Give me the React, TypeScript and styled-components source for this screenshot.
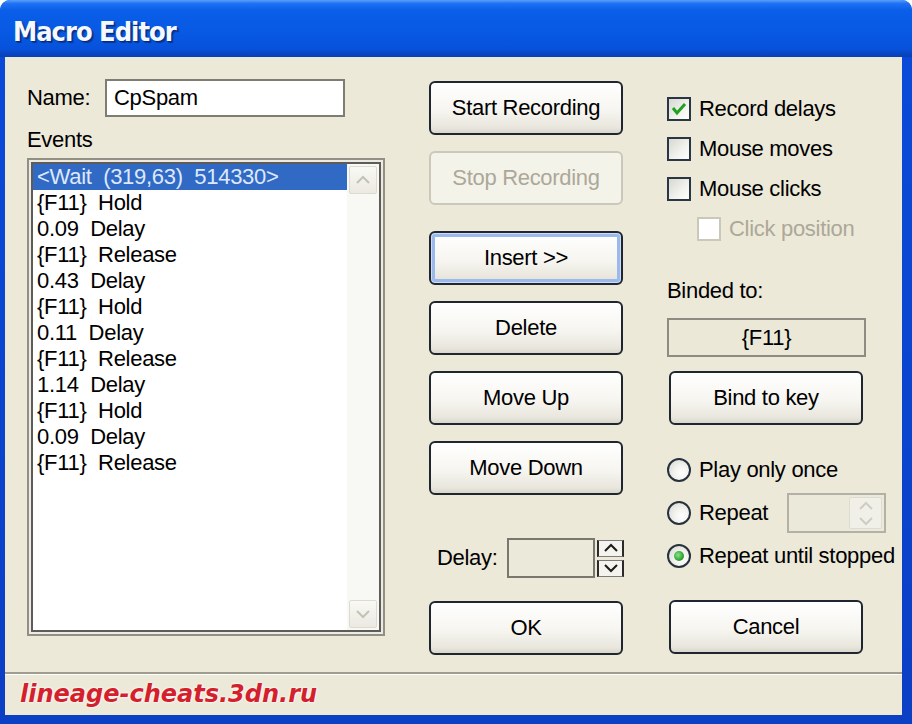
import React from 'react'
import styled, { createGlobalStyle } from 'styled-components'

const events = [
	'{F11}  Hold',
	'0.09  Delay',
	'{F11}  Release',
	'0.43  Delay',
	'{F11}  Hold',
	'0.11  Delay',
	'{F11}  Release',
	'1.14  Delay',
	'{F11}  Hold',
	'0.09  Delay',
	'{F11}  Release',
]

function Chevron({ up, color }: { up?: boolean; color: string }) {
	return (
		<svg width="16" height="10" viewBox="0 0 16 10">
			<polyline
				points={up ? '2,8 8,2 14,8' : '2,2 8,8 14,2'}
				fill="none"
				stroke={color}
				strokeWidth="2"
				strokeLinejoin="miter"
			/>
		</svg>
	)
}

function CheckOption({ label, checked, disabled, indent }: { label: string; checked?: boolean; disabled?: boolean; indent?: boolean }) {
	return (
		<StyledOptionRow $indent={indent}>
			<StyledCheckBox $disabled={disabled}>
				{checked && (
					<svg width="18" height="18" viewBox="0 0 18 18">
						<polyline points="3,8 7,13 15,4" fill="none" stroke="#21a121" strokeWidth="3" />
					</svg>
				)}
			</StyledCheckBox>
			<StyledOptionLabel $disabled={disabled}>{label}</StyledOptionLabel>
		</StyledOptionRow>
	)
}

function RadioOption({ label, selected, children }: { label: string; selected?: boolean; children?: React.ReactNode }) {
	return (
		<StyledRadioRow $tall={!!children}>
			<StyledRadio>{selected && <StyledRadioDot />}</StyledRadio>
			<StyledOptionLabel $width={children ? 88 : undefined}>{label}</StyledOptionLabel>
			{children}
		</StyledRadioRow>
	)
}

export default function App() {
	return (
		<>
			<GlobalStyle />
			<StyledWindow>
				<StyledTitleBar>
					<StyledTitle>Macro Editor</StyledTitle>
				</StyledTitleBar>
				<StyledFrame>
					<StyledClient>
						<StyledContent>
							<StyledColumn>
								<StyledNameRow>
									<StyledLabel $width={78}>Name:</StyledLabel>
									<StyledTextInput defaultValue="CpSpam" />
								</StyledNameRow>
								<StyledEventsLabel>Events</StyledEventsLabel>
								<StyledListFrame>
									<StyledList>
										<StyledListItem $selected>{'<Wait  (319,63)  514330>'}</StyledListItem>
										{events.map((item, i) => (
											<StyledListItem key={i}>{item}</StyledListItem>
										))}
									</StyledList>
									<StyledScrollbar>
										<StyledScrollArrow>
											<Chevron up color="#c4c2b6" />
										</StyledScrollArrow>
										<StyledScrollArrow>
											<Chevron color="#c4c2b6" />
										</StyledScrollArrow>
									</StyledScrollbar>
								</StyledListFrame>
							</StyledColumn>

							<StyledColumn $top={24}>
								<StyledButton>Start Recording</StyledButton>
								<StyledButton disabled $gap={16}>
									Stop Recording
								</StyledButton>
								<StyledButton $focused $gap={26}>
									Insert &gt;&gt;
								</StyledButton>
								<StyledButton $gap={16}>Delete</StyledButton>
								<StyledButton $gap={16}>Move Up</StyledButton>
								<StyledButton $gap={16}>Move Down</StyledButton>
								<StyledDelayRow>
									<StyledLabel $width={70}>Delay:</StyledLabel>
									<StyledDelayInput />
									<StyledSpin>
										<StyledSpinButton>
											<Chevron up color="#1a1a1a" />
										</StyledSpinButton>
										<StyledSpinButton>
											<Chevron color="#1a1a1a" />
										</StyledSpinButton>
									</StyledSpin>
								</StyledDelayRow>
								<StyledButton $gap={23}>OK</StyledButton>
							</StyledColumn>

							<StyledColumn $top={40}>
								<CheckOption label="Record delays" checked />
								<CheckOption label="Mouse moves" />
								<CheckOption label="Mouse clicks" />
								<CheckOption label="Click position" disabled indent />
								<StyledBindLabel>Binded to:</StyledBindLabel>
								<StyledBindBox>{'{F11}'}</StyledBindBox>
								<StyledButton $gap={14} $shift>
									Bind to key
								</StyledButton>
								<StyledRadioGroup>
									<RadioOption label="Play only once" />
									<RadioOption label="Repeat">
										<StyledRepeatBox>
											<StyledRepeatSpin>
												<Chevron up color="#cfcdc2" />
												<Chevron color="#cfcdc2" />
											</StyledRepeatSpin>
										</StyledRepeatBox>
									</RadioOption>
									<RadioOption label="Repeat until stopped" selected />
								</StyledRadioGroup>
								<StyledButton $gap={32} $shift>
									Cancel
								</StyledButton>
							</StyledColumn>
						</StyledContent>
						<StyledStatusBar>
							<StyledWatermark>lineage-cheats.3dn.ru</StyledWatermark>
						</StyledStatusBar>
					</StyledClient>
				</StyledFrame>
			</StyledWindow>
		</>
	)
}

const GlobalStyle = createGlobalStyle`
	html, body {
		margin: 0;
		padding: 0;
		background: #ffffff;
	}
	body {
		font-family: 'Liberation Sans', Arial, sans-serif;
		font-size: 22px;
		letter-spacing: -0.3px;
		color: #000000;
	}
`

const StyledWindow = styled.div`
	width: 912px;
	height: 724px;
	display: flex;
	flex-direction: column;
	border-radius: 10px 10px 0 0;
	overflow: hidden;
	background: #0b44d2;
`

const StyledTitleBar = styled.div`
	height: 57px;
	flex-shrink: 0;
	box-sizing: border-box;
	display: flex;
	align-items: center;
	padding: 6px 0 0 13px;
	background: linear-gradient(
		to bottom,
		#5aa0fa 0%,
		#2072f4 6%,
		#0a5ee8 18%,
		#0859e4 55%,
		#0752dc 85%,
		#0a3fb4 100%
	);
`

const StyledTitle = styled.h1`
	margin: 0;
	font-family: 'DejaVu Sans Condensed', 'DejaVu Sans', sans-serif;
	font-stretch: condensed;
	font-weight: bold;
	font-size: 27px;
	letter-spacing: -1px;
	color: #f4f8ff;
	text-shadow: 1px 1px 0 #0a2a80, 2px 2px 1px rgba(0, 0, 0, 0.35);
`

const StyledFrame = styled.div`
	flex: 1;
	display: flex;
	padding: 0 10px 9px 5px;
	background: linear-gradient(to bottom, #0a4ad8, #0b3fc4);
`

const StyledClient = styled.div`
	flex: 1;
	display: flex;
	flex-direction: column;
	background: #ece9d8;
`

const StyledContent = styled.div`
	height: 615px;
	flex-shrink: 0;
	box-sizing: border-box;
	display: grid;
	grid-template-columns: 358px 194px 1fr;
	column-gap: 44px;
	padding-left: 22px;
`

const StyledColumn = styled.div<{ $top?: number }>`
	display: flex;
	flex-direction: column;
	align-items: flex-start;
	padding-top: ${(p) => p.$top ?? 0}px;
`

const StyledLabel = styled.span<{ $width?: number }>`
	display: inline-block;
	width: ${(p) => (p.$width ? `${p.$width}px` : 'auto')};
	flex-shrink: 0;
	white-space: nowrap;
`

const StyledNameRow = styled.div`
	display: flex;
	align-items: center;
	height: 38px;
	margin-top: 22px;
`

const StyledTextInput = styled.input`
	width: 240px;
	height: 38px;
	box-sizing: border-box;
	border: 2px solid #7f7d72;
	background: #ffffff;
	padding: 0 0 0 7px;
	margin: 0;
	font: inherit;
	letter-spacing: inherit;
	color: #000000;
	outline: none;
`

const StyledEventsLabel = styled.div`
	height: 26px;
	line-height: 26px;
	margin-top: 10px;
`

const StyledListFrame = styled.div`
	margin-top: 5px;
	width: 358px;
	height: 478px;
	box-sizing: border-box;
	border: 2px solid #928f84;
	padding: 4px;
	display: flex;
	background: #ffffff;
	box-shadow: inset 0 0 0 2px #eceae2, inset 0 0 0 4px #5d5c56;
`

const StyledList = styled.div`
	flex: 1;
	display: flex;
	flex-direction: column;
	background: #ffffff;
`

const StyledListItem = styled.div<{ $selected?: boolean }>`
	height: 26px;
	line-height: 26px;
	padding-left: 4px;
	white-space: pre;
	background: ${(p) => (p.$selected ? '#316ac5' : 'transparent')};
	color: ${(p) => (p.$selected ? '#dfe8fb' : '#000000')};
`

const StyledScrollbar = styled.div`
	width: 32px;
	display: flex;
	flex-direction: column;
	justify-content: space-between;
	align-items: center;
	padding: 2px 0;
	box-sizing: border-box;
	background: #f8f8f4;
`

const StyledScrollArrow = styled.div`
	width: 28px;
	height: 28px;
	box-sizing: border-box;
	display: flex;
	align-items: center;
	justify-content: center;
	border: 1px solid #dddbd0;
	border-radius: 2px;
	background: linear-gradient(to bottom, #f9f9f5, #ebe9e0);
`

const StyledButton = styled.button<{ $gap?: number; $focused?: boolean; $shift?: boolean }>`
	width: 194px;
	height: 54px;
	flex-shrink: 0;
	margin: ${(p) => p.$gap ?? 0}px 0 0 ${(p) => (p.$shift ? 2 : 0)}px;
	padding: 0;
	box-sizing: border-box;
	border: 2px solid #1f2630;
	border-radius: 6px;
	background: linear-gradient(to bottom, #ffffff 0%, #f6f5f0 55%, #e8e6dc 90%, #d9d7cc 100%);
	font: inherit;
	letter-spacing: inherit;
	color: #000000;
	box-shadow: ${(p) => (p.$focused ? 'inset 0 0 0 1px #cfdcf5, inset 0 0 0 4px #9cb9ee' : 'none')};

	&:disabled {
		border-color: #cbc8bb;
		background: #f4f3ea;
		color: #aca899;
	}
`

const StyledDelayRow = styled.div`
	display: flex;
	align-items: center;
	height: 40px;
	margin-top: 43px;
	padding-left: 8px;
`

const StyledDelayInput = styled.div`
	width: 88px;
	height: 40px;
	box-sizing: border-box;
	border: 2px solid #7a786e;
	background: #ebe9da;
`

const StyledSpin = styled.div`
	display: flex;
	flex-direction: column;
	gap: 3px;
	margin-left: 2px;
`

const StyledSpinButton = styled.div`
	width: 27px;
	height: 17px;
	box-sizing: border-box;
	display: flex;
	align-items: center;
	justify-content: center;
	border-left: 2px solid #2a2a2a;
	border-right: 2px solid #2a2a2a;
	border-top: 1px solid #7a7a7a;
	border-bottom: 1px solid #7a7a7a;
	background: #f4f3ee;
`

const StyledOptionRow = styled.div<{ $indent?: boolean }>`
	display: flex;
	align-items: center;
	gap: 8px;
	height: 24px;
	margin-bottom: 16px;
	padding-left: ${(p) => (p.$indent ? 30 : 0)}px;
`

const StyledCheckBox = styled.div<{ $disabled?: boolean }>`
	width: 24px;
	height: 24px;
	box-sizing: border-box;
	display: flex;
	align-items: center;
	justify-content: center;
	border: 2px solid ${(p) => (p.$disabled ? '#cac8bb' : '#2a3644')};
	background: ${(p) => (p.$disabled ? '#ffffff' : 'linear-gradient(135deg, #d8d8d2 0%, #f2f2ee 60%, #ffffff 100%)')};
`

const StyledOptionLabel = styled.span<{ $disabled?: boolean; $width?: number }>`
	white-space: nowrap;
	line-height: 24px;
	color: ${(p) => (p.$disabled ? '#aca899' : '#000000')};
	width: ${(p) => (p.$width ? `${p.$width}px` : 'auto')};
	flex-shrink: 0;
`

const StyledBindLabel = styled.div`
	height: 26px;
	line-height: 26px;
	margin-top: 21px;
`

const StyledBindBox = styled.div`
	width: 199px;
	height: 39px;
	margin-top: 14px;
	box-sizing: border-box;
	display: flex;
	align-items: center;
	justify-content: center;
	border: 2px solid #8e8c82;
	background: #ebe8d8;
`

const StyledRadioGroup = styled.div`
	display: flex;
	flex-direction: column;
	gap: 11px;
	margin-top: 33px;
`

const StyledRadioRow = styled.div<{ $tall?: boolean }>`
	display: flex;
	align-items: center;
	gap: 8px;
	height: ${(p) => (p.$tall ? 40 : 24)}px;
`

const StyledRadio = styled.div`
	width: 24px;
	height: 24px;
	flex-shrink: 0;
	box-sizing: border-box;
	border-radius: 50%;
	border: 2px solid #26313d;
	display: flex;
	align-items: center;
	justify-content: center;
	background: radial-gradient(circle at 65% 65%, #ffffff 0%, #f1f1ec 45%, #d4d4cc 100%);
`

const StyledRadioDot = styled.div`
	width: 10px;
	height: 10px;
	border-radius: 50%;
	background: radial-gradient(circle at 40% 40%, #8fe08f 0%, #2fa82f 60%, #1d7a1d 100%);
`

const StyledRepeatBox = styled.div`
	width: 99px;
	height: 40px;
	margin-left: -8px;
	box-sizing: border-box;
	display: flex;
	justify-content: flex-end;
	border: 2px solid #b3b1a5;
	background: #ebe9da;
	padding: 2px;
`

const StyledRepeatSpin = styled.div`
	width: 31px;
	display: flex;
	flex-direction: column;
	align-items: center;
	justify-content: space-around;
	border: 1px solid #dedcd2;
	border-radius: 2px;
	background: #f1f0e8;
`

const StyledStatusBar = styled.div`
	flex: 1;
	box-sizing: border-box;
	border-top: 2px solid #9f9d90;
	box-shadow: inset 0 1px 0 #ffffff;
	padding: 6px 0 0 15px;
`

const StyledWatermark = styled.span`
	font-family: 'DejaVu Sans', Verdana, sans-serif;
	font-style: italic;
	font-weight: bold;
	font-size: 24px;
	letter-spacing: 0;
	color: #d41f2c;
	text-shadow: 0 0 2px #ffffff, 0 0 3px #ffffff;
`
